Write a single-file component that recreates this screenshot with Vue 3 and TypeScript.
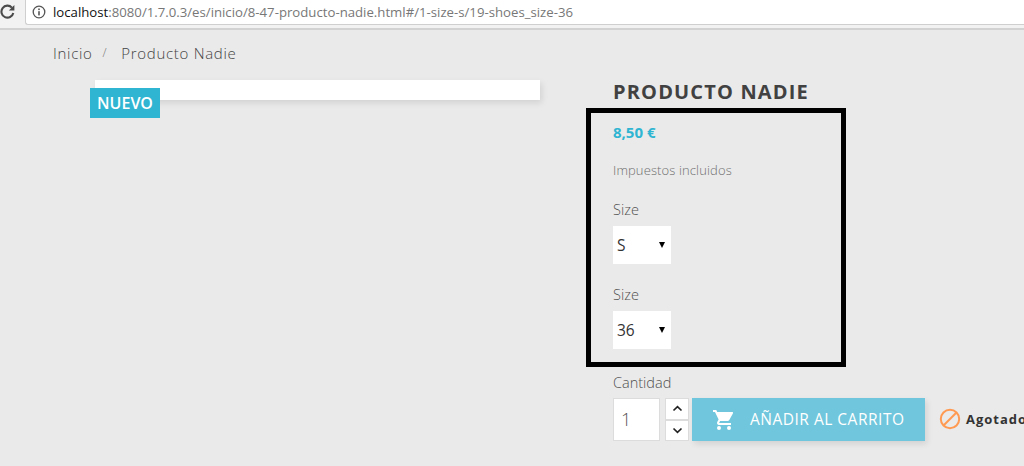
<script setup lang="ts">
const url = { host: 'localhost', rest: ':8080/1.7.0.3/es/inicio/8-47-producto-nadie.html#/1-size-s/19-shoes_size-36' }
const variants = [
  { label: 'Size', value: 'S' },
  { label: 'Size', value: '36' }
]
</script>

<template>
  <div class="page">
    <header class="browser">
      <svg class="reload" width="15" height="15" viewBox="0 0 15 15">
        <path d="M11.9 3.6A6 6 0 1 0 13.3 9" fill="none" stroke="#4a4a4a" stroke-width="2.1" />
        <path d="M14.4 1v5.6H8.8z" fill="#4a4a4a" />
      </svg>
      <div class="address">
        <svg class="info" width="14" height="14" viewBox="0 0 14 14">
          <circle cx="7" cy="7" r="5.8" fill="none" stroke="#555" stroke-width="1.3" />
          <rect x="6.2" y="6.2" width="1.6" height="4.2" fill="#555" />
          <rect x="6.2" y="3.5" width="1.6" height="1.6" fill="#555" />
        </svg>
        <span class="host">{{ url.host }}</span><span class="rest">{{ url.rest }}</span>
      </div>
    </header>

    <nav class="crumbs">
      <span>Inicio</span>
      <span class="sep">/</span>
      <span>Producto Nadie</span>
    </nav>

    <main class="product">
      <section class="gallery">
        <div class="cover"></div>
        <span class="flag">NUEVO</span>
      </section>

      <section class="info-col">
        <h1 class="title">PRODUCTO NADIE</h1>
        <div class="box">
          <div class="price">8,50 €</div>
          <div class="tax">Impuestos incluidos</div>
          <div v-for="(v, i) in variants" :key="i" class="variant">
            <div class="label">{{ v.label }}</div>
            <div class="select">
              <span>{{ v.value }}</span>
              <i class="caret"></i>
            </div>
          </div>
        </div>

        <div class="label qty-label">Cantidad</div>
        <div class="buy">
          <div class="qty">1</div>
          <div class="spin">
            <button class="spin-btn">
              <svg width="11" height="7" viewBox="0 0 11 7"><path d="M1.5 5.5 5.5 1.7l4 3.8" fill="none" stroke="#222" stroke-width="1.7" /></svg>
            </button>
            <button class="spin-btn">
              <svg width="11" height="7" viewBox="0 0 11 7"><path d="M1.5 1.5l4 3.8 4-3.8" fill="none" stroke="#222" stroke-width="1.7" /></svg>
            </button>
          </div>
          <button class="add">
            <svg width="24" height="24" viewBox="0 0 24 24">
              <path d="M7 18a2 2 0 1 0 0 4 2 2 0 0 0 0-4zM1 2v2h2l3.6 7.59-1.35 2.45A2 2 0 0 0 7 17h12v-2H7.42a.25.25 0 0 1-.25-.25l.03-.12L8.1 13h7.45c.75 0 1.41-.41 1.75-1.03l3.58-6.49A1 1 0 0 0 20 4H5.21l-.94-2zm16 16a2 2 0 1 0 0 4 2 2 0 0 0 0-4z" fill="#fff" />
            </svg>
            <span>AÑADIR AL CARRITO</span>
          </button>
          <div class="stock">
            <svg width="22" height="22" viewBox="0 0 22 22">
              <circle cx="11" cy="11" r="9.2" fill="none" stroke="#ff9a52" stroke-width="2" />
              <path d="M4.5 17.5l13-13" stroke="#ff9a52" stroke-width="2" />
            </svg>
            <span>Agotado</span>
          </div>
        </div>
      </section>
    </main>
  </div>
</template>

<style>
html, body {
  margin: 0;
  background: #eaeaea;
  overflow: hidden;
}
</style>

<style scoped>
.page {
  width: 1024px;
  height: 466px;
  overflow: hidden;
  background: #eaeaea;
  font-family: "Open Sans", "Noto Sans", sans-serif;
  color: #4a4a4a;
}
.browser {
  height: 28px;
  display: flex;
  align-items: flex-start;
  background: #f2f2f2;
  border-bottom: 2px solid #d2d2d2;
  box-sizing: content-box;
}
.reload {
  margin: 4px 10px 0 0;
  flex: none;
}
.address {
  flex: 1;
  height: 24px;
  display: flex;
  align-items: center;
  padding-left: 27px;
  position: relative;
  background: #fff;
  border-left: 1px solid #cfcfcf;
  border-bottom: 1px solid #cfcfcf;
  border-radius: 0 0 0 3px;
  font-size: 13.2px;
}
.info {
  position: absolute;
  left: 6px;
  top: 5px;
}
.host { color: #111; }
.rest { color: #777; }
.crumbs {
  display: flex;
  margin: 13px 0 0 53px;
  height: 19px;
  align-items: center;
  font-size: 15px;
  color: #444;
  font-weight: 300;
  letter-spacing: 0.7px;
}
.sep {
  margin: 0 14px 0 10px;
  color: #777;
  font-size: 12px;
}
.product {
  display: flex;
  padding-left: 90px;
}
.gallery {
  width: 523px;
  flex: none;
  padding-top: 18px;
  position: relative;
}
.cover {
  margin-left: 5px;
  width: 445px;
  height: 20px;
  background: #fff;
  box-shadow: 2px 3px 6px rgba(0, 0, 0, 0.1);
}
.flag {
  position: absolute;
  left: 0;
  top: 26px;
  width: 70px;
  height: 30px;
  line-height: 30px;
  text-align: center;
  background: #2fb5d2;
  color: #fff;
  font-size: 16px;
  font-weight: 600;
}
.info-col {
  flex: 1;
  min-width: 0;
}
.title {
  margin: 18px 0 0;
  height: 24px;
  line-height: 24px;
  font-size: 20px;
  font-weight: 700;
  letter-spacing: 1.15px;
  color: #414141;
  white-space: nowrap;
}
.box {
  width: 260px;
  height: 259px;
  margin: 4px 0 0 -27px;
  box-sizing: border-box;
  border: 5px solid #000;
  padding: 9px 0 0 22px;
}
.price {
  height: 20px;
  line-height: 20px;
  font-size: 15px;
  font-weight: 700;
  color: #2fb5d2;
}
.tax {
  margin-top: 19px;
  height: 18px;
  line-height: 18px;
  font-size: 13px;
  font-weight: 300;
  letter-spacing: 0.12px;
  color: #6f6f6f;
}
.variant {
  height: 84.5px;
}
.tax + .variant { margin-top: 21px; }
.label {
  height: 20px;
  line-height: 20px;
  font-size: 14.5px;
  color: #505050;
  font-weight: 300;
}
.select {
  margin-top: 6px;
  width: 58px;
  height: 38px;
  background: #fff;
  display: flex;
  align-items: center;
  justify-content: space-between;
  padding: 0 5px 0 4px;
  box-sizing: border-box;
  font-size: 15.5px;
  color: #333;
}
.caret {
  width: 0;
  height: 0;
  border-left: 3px solid transparent;
  border-right: 3px solid transparent;
  border-top: 6px solid #000;
  margin-right: 1px;
}
.qty-label {
  margin-top: 6px;
}
.buy {
  display: flex;
  align-items: flex-start;
  margin-top: 5px;
}
.qty {
  width: 47px;
  height: 43px;
  flex: none;
  box-sizing: border-box;
  background: #fff;
  border: 1px solid #dcdcdc;
  line-height: 41px;
  padding-left: 7px;
  font-size: 18px;
  font-weight: 300;
  color: #555;
}
.spin {
  margin-left: 5px;
  width: 24px;
  flex: none;
  display: flex;
  flex-direction: column;
}
.spin-btn {
  height: 21.5px;
  width: 24px;
  padding: 0;
  box-sizing: border-box;
  background: #fff;
  border: 1px solid #dcdcdc;
  display: flex;
  align-items: center;
  justify-content: center;
}
.add {
  margin-left: 3px;
  width: 233px;
  height: 43px;
  border: none;
  background: #70c6dc;
  color: #fff;
  box-shadow: 2px 3px 6px rgba(0, 0, 0, 0.1);
  display: flex;
  align-items: center;
  padding: 0 0 0 20px;
  font-family: inherit;
  font-size: 15.5px;
  font-weight: 400;
  letter-spacing: 0.5px;
  flex: none;
}
.add span { margin: 0 0 2px 14px; white-space: nowrap; }
.stock {
  display: flex;
  align-items: center;
  flex: none;
  margin: 0 0 0 14px;
  height: 42px;
  font-size: 13px;
  font-weight: 700;
  letter-spacing: 1px;
  color: #333;
  white-space: nowrap;
}
.stock span { margin-left: 5px; }
</style>
